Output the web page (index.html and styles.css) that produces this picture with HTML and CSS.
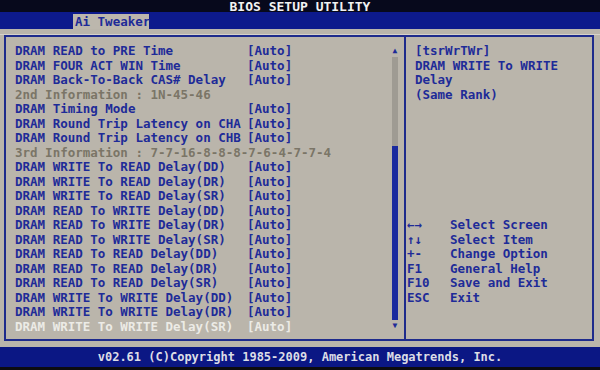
FILE: index.html
```html
<!DOCTYPE html>
<html lang="en">
  <head>
    <meta charset="UTF-8" />
    <title>BIOS SETUP UTILITY</title>
    <link rel="stylesheet" href="styles.css">
  </head>
  <body>
    <div class="screen">
      <div class="titlebar">BIOS SETUP UTILITY</div>
      <div class="tabbar"><span class="tab">Ai Tweaker</span></div>
      <div class="spacer"></div>

      <div class="main">
        <!-- settings list -->
        <div class="left">
          <ul class="list">
            <li class="row"><span class="name">DRAM READ to PRE Time</span><span class="value">[Auto]</span></li>
            <li class="row"><span class="name">DRAM FOUR ACT WIN Time</span><span class="value">[Auto]</span></li>
            <li class="row"><span class="name">DRAM Back-To-Back CAS# Delay</span><span class="value">[Auto]</span></li>
            <li class="row info">2nd Information : 1N-45-46</li>
            <li class="row"><span class="name">DRAM Timing Mode</span><span class="value">[Auto]</span></li>
            <li class="row"><span class="name">DRAM Round Trip Latency on CHA</span><span class="value">[Auto]</span></li>
            <li class="row"><span class="name">DRAM Round Trip Latency on CHB</span><span class="value">[Auto]</span></li>
            <li class="row info">3rd Information : 7-7-16-8-8-8-7-6-4-7-7-4</li>
            <li class="row"><span class="name">DRAM WRITE To READ Delay(DD)</span><span class="value">[Auto]</span></li>
            <li class="row"><span class="name">DRAM WRITE To READ Delay(DR)</span><span class="value">[Auto]</span></li>
            <li class="row"><span class="name">DRAM WRITE To READ Delay(SR)</span><span class="value">[Auto]</span></li>
            <li class="row"><span class="name">DRAM READ To WRITE Delay(DD)</span><span class="value">[Auto]</span></li>
            <li class="row"><span class="name">DRAM READ To WRITE Delay(DR)</span><span class="value">[Auto]</span></li>
            <li class="row"><span class="name">DRAM READ To WRITE Delay(SR)</span><span class="value">[Auto]</span></li>
            <li class="row"><span class="name">DRAM READ To READ Delay(DD)</span><span class="value">[Auto]</span></li>
            <li class="row"><span class="name">DRAM READ To READ Delay(DR)</span><span class="value">[Auto]</span></li>
            <li class="row"><span class="name">DRAM READ To READ Delay(SR)</span><span class="value">[Auto]</span></li>
            <li class="row"><span class="name">DRAM WRITE To WRITE Delay(DD)</span><span class="value">[Auto]</span></li>
            <li class="row"><span class="name">DRAM WRITE To WRITE Delay(DR)</span><span class="value">[Auto]</span></li>
            <li class="row selected"><span class="name">DRAM WRITE To WRITE Delay(SR)</span><span class="value">[Auto]</span></li>
          </ul>
          <div class="scroll">
            <span class="arrow">▲</span>
            <span class="track"></span>
            <span class="thumb"></span>
            <span class="arrow">▼</span>
          </div>
        </div>

        <!-- help panel -->
        <div class="right">
          <div class="help">
            <div>[tsrWrTWr]</div>
            <div>DRAM WRITE To WRITE</div>
            <div>Delay</div>
            <div>(Same Rank)</div>
          </div>
          <div class="keys">
            <div class="key"><span>←→</span><span>Select Screen</span></div>
            <div class="key"><span>↑↓</span><span>Select Item</span></div>
            <div class="key"><span>+-</span><span>Change Option</span></div>
            <div class="key"><span>F1</span><span>General Help</span></div>
            <div class="key"><span>F10</span><span>Save and Exit</span></div>
            <div class="key"><span>ESC</span><span>Exit</span></div>
          </div>
        </div>
      </div>

      <div class="spacer bottom"></div>
      <div class="footer">v02.61 (C)Copyright 1985-2009, American Megatrends, Inc.</div>
    </div>
  </body>
</html>
```

FILE: styles.css
```css
/* BIOS screen */
body {
  margin: 0;
  padding: 0;
  background: #0c0c10;
  font-family: "DejaVu Sans Mono", "Liberation Mono", monospace;
  font-weight: bold;
}

.screen {
  width: 600px;
  height: 367px;
  background: #bab5ab;
  display: flex;
  flex-direction: column;
}

.titlebar {
  height: 12px;
  line-height: 13px;
  background: #07091c;
  color: #f2f2f2;
  font-size: 13px;
  text-align: center;
}

.tabbar {
  height: 17px;
  background: #0d1a8c;
  padding-left: 73px;
  display: flex;
  align-items: flex-end;
}

.tab {
  width: 76px;
  height: 15px;
  line-height: 15px;
  background: #bcb7ad;
  color: #1e2b98;
  font-size: 12.5px;
  padding-left: 2px;
  box-sizing: border-box;
  white-space: nowrap;
}

.spacer {
  height: 6px;
  border-bottom: 1px solid #d6d2ca;
  box-sizing: border-box;
}

.spacer.bottom {
  border: none;
}

.main {
  height: 306px;
  margin: 0 6px 0 4px;
  border: 2px solid #1e2b8c;
  box-sizing: border-box;
  display: flex;
}

.left {
  width: 395px;
  display: flex;
}

.list {
  list-style: none;
  margin: 0;
  padding: 7px 0 0 9px;
  width: 377px;
  font-size: 12.5px;
  line-height: 14.5px;
  color: #1e2b98;
}

.row {
  display: flex;
  white-space: pre;
}

.name {
  width: 232px;
}

.row.info {
  color: #7b7567;
}

.row.selected {
  color: #ecebe6;
}

.scroll {
  width: 6px;
  padding-top: 8px;
  display: flex;
  flex-direction: column;
  align-items: center;
}

.arrow {
  font-size: 8px;
  line-height: 12px;
  height: 12px;
  color: #1e2b98;
}

.track {
  width: 6px;
  height: 89px;
  background: #9f9b93;
}

.thumb {
  width: 6px;
  height: 174px;
  background: #1a2a9e;
}

.right {
  flex: 1;
  margin-left: 3px;
  border-left: 2px solid #1e2b8c;
  padding-top: 7px;
  font-size: 12.5px;
  line-height: 14.5px;
  color: #1e2b98;
}

.help {
  padding-left: 9px;
  height: 58px;
}

.keys {
  margin-top: 116px;
  padding-left: 1px;
}

.key {
  display: flex;
  white-space: pre;
}

.key span:first-child {
  width: 43px;
}

.footer {
  height: 20px;
  line-height: 20px;
  background: #0b1784;
  color: #dcdde6;
  font-size: 12px;
  text-align: center;
}
```
